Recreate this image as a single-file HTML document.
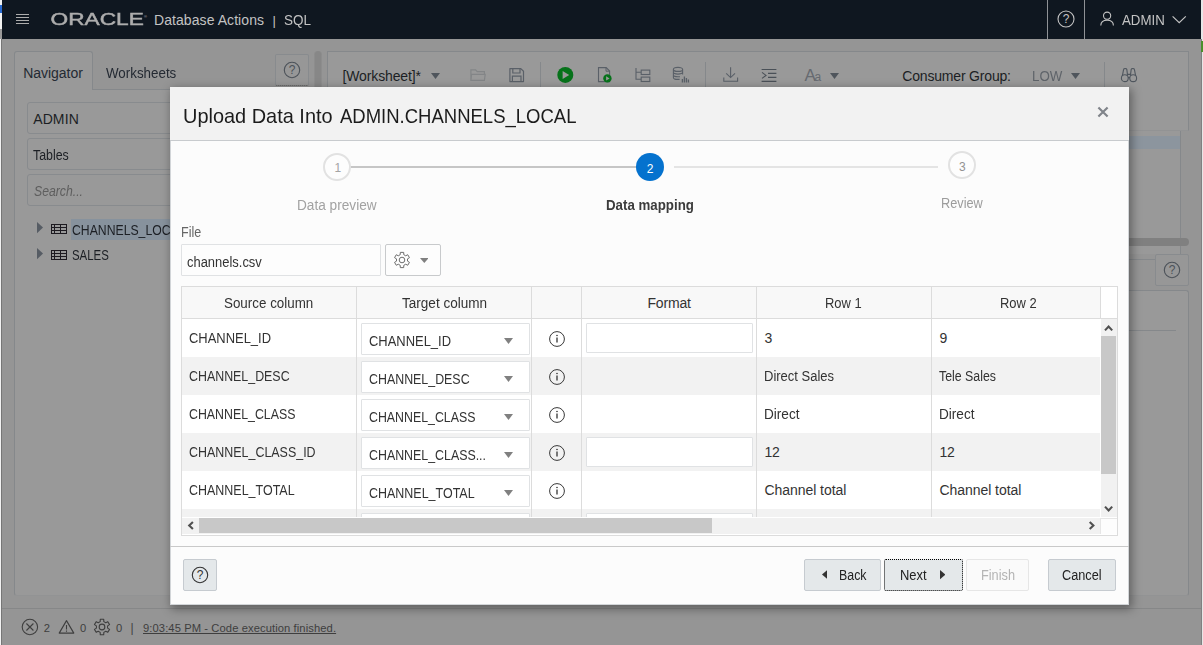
<!DOCTYPE html>
<html lang="en">
<head>
<meta charset="utf-8">
<title>Database Actions | SQL</title>
<style>
*{box-sizing:border-box;margin:0;padding:0}
html,body{width:1203px;height:645px;overflow:hidden;background:#959595}
body{font-family:"Liberation Sans",sans-serif;font-size:14px;color:#333;position:relative}
#app{position:absolute;left:0;top:0;width:1203px;height:645px;overflow:hidden;background:#959595}
.abs,.t,#app div,#app section,#app header,#app footer,#app button,#app svg,#app i,#app a,#app nav,#app ul,#app li,#app h1,#app label{position:absolute}
.t{white-space:pre;line-height:20px;display:block}
button{font:inherit;border:0;background:none}
ul{list-style:none;left:0;top:0}
h1{font:inherit;left:0;top:0}
.hdr{left:2px;top:0;width:1199px;height:39px;background:#0f1720}
.hdr .sep{top:0;width:1px;height:39px;background:#8f9296}
.panel{background:#999;border:1px solid #85888b;border-bottom-color:#929394}
.box{border:1px solid #888b8e;border-radius:3px;background:#999}
.dlg{left:170px;top:87px;width:959px;height:518px;background:#fcfcfc;box-shadow:2px 3px 9px 1px rgba(0,0,0,.37);outline:1px solid #d2d5d8;outline-offset:-1px}
.dlg-h{left:0;top:0;width:959px;height:54px;background:#f2f2f2;border-bottom:1px solid #c8cbce}
.btn{border:1px solid #c6cbd0;background:#e4e8ea;border-radius:2px}
.cell-in{border:1px solid #e0e2e4;background:#fff;border-radius:1px}
.row{left:0;width:918px;height:38px}
.row.alt{background:#f2f2f2}
.vline{width:1px;background:#dcdcdc}
</style>
</head>
<body>
<div id="app"><i class="abs" style="left:0;top:0;width:2px;height:645px;background:#f2f2f2"></i><i class="abs" style="left:0;top:5px;width:2px;height:8px;background:#2a6bd0"></i><i class="abs" style="left:0;top:29px;width:2px;height:10px;background:#9a9a9a"></i><i class="abs" style="left:1px;top:39px;width:1px;height:606px;background:#767676"></i><i class="abs" style="left:1201px;top:0;width:2px;height:645px;background:#e6e6e6"></i><i class="abs" style="left:1201px;top:39px;width:1px;height:606px;background:#808080"></i><i class="abs" style="left:1201px;top:41px;width:2px;height:11px;background:#4b8f2c"></i><header class="hdr"><i style="left:14px;top:14px;width:12.5px;height:1px;background:#adadad"></i><i style="left:14px;top:17px;width:12.5px;height:1px;background:#adadad"></i><i style="left:14px;top:20px;width:12.5px;height:1px;background:#adadad"></i><i style="left:14px;top:23px;width:12.5px;height:1px;background:#adadad"></i><svg style="left:48px;top:10px" width="100" height="20" viewBox="0 0 100 20"><text x="0.6" y="15" textLength="93.2" lengthAdjust="spacingAndGlyphs" font-family="Liberation Sans, sans-serif" font-size="16" fill="#adadad" stroke="#adadad" stroke-width="0.45" style="filter:grayscale(1)">ORACLE</text><text x="94" y="7.5" font-family="Liberation Sans, sans-serif" font-size="4" fill="#bdbdbd">®</text></svg><span class="t" style="left:152.00px;top:10.00px;font-size:14px;color:#c3c3c3;letter-spacing:0.069px;">Database Actions</span><span class="t" style="left:270.40px;top:10.50px;font-size:13px;color:#c3c3c3;">|</span><span class="t" style="left:282.00px;top:10.00px;font-size:14px;color:#c3c3c3;transform:scaleX(0.9637);transform-origin:0 0;">SQL</span><i class="sep" style="left:1045px"></i><i class="sep" style="left:1082px"></i><svg style="left:1054px;top:9px" width="20" height="20" viewBox="0 0 20 20"><circle cx="10" cy="10" r="8" fill="none" stroke="#c3c3c3" stroke-width="1.1"/><text x="10" y="14.2" text-anchor="middle" font-family="Liberation Sans, sans-serif" font-size="12" fill="#c3c3c3">?</text></svg><svg style="left:1097px;top:10px" width="18" height="18" viewBox="0 0 18 18"><circle cx="8.1" cy="5.7" r="3.6" fill="none" stroke="#c3c3c3" stroke-width="1.1"/><path d="M1.8 15.6 C1.8 11.8 4.6 10.2 8.1 10.2 C11.6 10.2 14.4 11.8 14.4 15.6" fill="none" stroke="#c3c3c3" stroke-width="1.1"/></svg><span class="t" style="left:1119.50px;top:10.00px;font-size:14px;color:#c3c3c3;transform:scaleX(0.9485);transform-origin:0 0;">ADMIN</span><svg style="left:1169px;top:14px" width="18" height="12" viewBox="0 0 18 12"><path d="M1.6 2.4 L8.2 8.6 L14.8 2.4" fill="none" stroke="#c3c3c3" stroke-width="1.2"/></svg></header><section class="panel" style="left:14px;top:89px;width:300px;height:507px;border-radius:0 0 3px 3px"></section><div class="abs" style="left:14px;top:51px;width:79px;height:39px;background:#999;border:1px solid #85888b;border-bottom:0;border-radius:3px 3px 0 0"></div><span class="t" style="left:23.30px;top:62.50px;font-size:14px;color:#242a33;letter-spacing:-0.053px;">Navigator</span><span class="t" style="left:106.30px;top:62.50px;font-size:14px;color:#242a33;transform:scaleX(0.9542);transform-origin:0 0;">Worksheets</span><button class="abs" style="left:275px;top:54px;width:34px;height:32px;border:1px solid #888b8e;border-bottom:1px dotted #555;border-radius:2px;background:#979797"></button><svg style="left:282px;top:60px" width="20" height="20" viewBox="0 0 20 20"><circle cx="10" cy="10" r="7.7" fill="none" stroke="#4c5259" stroke-width="1.1"/><text x="10" y="14.2" text-anchor="middle" font-family="Liberation Sans, sans-serif" font-size="12" fill="#4c5259">?</text></svg><div class="box" style="left:27px;top:102px;width:280px;height:32px"></div><span class="t" style="left:33.20px;top:109.20px;font-size:14px;color:#1c1f24;letter-spacing:0.119px;">ADMIN</span><div class="box" style="left:27px;top:138px;width:280px;height:32px"></div><span class="t" style="left:33.20px;top:145.00px;font-size:14px;color:#1c1f24;transform:scaleX(0.8846);transform-origin:0 0;">Tables</span><div class="box" style="left:27px;top:174px;width:280px;height:32px"></div><span class="t" style="left:34.00px;top:181.00px;font-size:14px;color:#5e5e5e;transform:scaleX(0.8745);transform-origin:0 0;font-style:italic;">Search...</span><ul><li class="abs" style="left:71px;top:219px;width:110px;height:21px;background:#87929d"></li><svg style="left:37px;top:222.4px" width="6" height="11.199999999999989" viewBox="0 0 6 11.199999999999989"><polygon points="0,0 6,5.599999999999994 0,11.199999999999989" fill="#565c64"/></svg><svg style="left:51px;top:224px" width="16" height="10" viewBox="0 0 16 10" shape-rendering="crispEdges"><path d="M0 0.5H16M0 3.5H16M0 6.5H16M0 9.5H16M0.5 0V10M3.5 0V10M9.5 0V10M15.5 0V10" stroke="#1d1a20" stroke-width="1" fill="none"/></svg><span class="t" style="left:72.00px;top:219.70px;font-size:14px;color:#1c1f24;transform:scaleX(0.8735);transform-origin:0 0;">CHANNELS_LOCAL</span><svg style="left:37px;top:248.4px" width="6" height="11.200000000000017" viewBox="0 0 6 11.200000000000017"><polygon points="0,0 6,5.6000000000000085 0,11.200000000000017" fill="#565c64"/></svg><svg style="left:51px;top:250px" width="16" height="10" viewBox="0 0 16 10" shape-rendering="crispEdges"><path d="M0 0.5H16M0 3.5H16M0 6.5H16M0 9.5H16M0.5 0V10M3.5 0V10M9.5 0V10M15.5 0V10" stroke="#1d1a20" stroke-width="1" fill="none"/></svg><span class="t" style="left:72.00px;top:244.70px;font-size:14px;color:#1c1f24;transform:scaleX(0.8152);transform-origin:0 0;">SALES</span></ul><div class="abs" style="left:314px;top:51px;width:8px;height:550px;background:#878787;border-radius:4px 4px 0 0;border-left:1px solid #8d8d8d;border-right:1px solid #8d8d8d"></div><section class="panel" style="left:327px;top:51px;width:862px;height:80px"></section><span class="t" style="left:342.50px;top:66.00px;font-size:14px;color:#1c1f24;letter-spacing:-0.126px;">[Worksheet]*</span><svg style="left:430.5px;top:73px" width="9.0" height="6" viewBox="0 0 9.0 6"><polygon points="0,0 9.0,0 4.5,6" fill="#4f555c"/></svg><svg style="left:469px;top:66px" width="18" height="18" viewBox="0 0 18 18"><path d="M1.9 14.3V3.8H6.6L8.2 5.6H15.4V8.3M1.9 14.3L2.6 8.3H16.2L15.4 14.3Z" fill="none" stroke="#838587" stroke-width="1.2"/></svg><svg style="left:508px;top:66px" width="18" height="18" viewBox="0 0 18 18"><path d="M1.9 2.6H12.8L15.5 5.2V15.6H1.9Z" fill="none" stroke="#5a6068" stroke-width="1.2" stroke-linejoin="round"/><path d="M4.8 2.6V7H12V2.6M4.4 15.6V10.2H13V15.6" fill="none" stroke="#5a6068" stroke-width="1.2"/></svg><i class="abs" style="left:540px;top:62px;width:1px;height:60px;background:#85888b"></i><svg style="left:556px;top:66px" width="18" height="18" viewBox="0 0 18 18"><circle cx="9.3" cy="8.9" r="8" fill="#06721a"/><polygon points="6.6,4.9 13.2,8.9 6.6,12.9" fill="#999"/></svg><svg style="left:596px;top:65px" width="18" height="19" viewBox="0 0 18 19"><path d="M2.5 2.6H10.2L13.6 6V16.6H2.5Z" fill="none" stroke="#5a6068" stroke-width="1.1"/><path d="M10 2.8V6.2H13.4" fill="none" stroke="#5a6068" stroke-width="1"/><circle cx="11.4" cy="13.4" r="4.2" fill="#06721a"/><polygon points="10.1,11.3 13.6,13.4 10.1,15.5" fill="#999"/></svg><svg style="left:634px;top:66px" width="18" height="18" viewBox="0 0 18 18"><path d="M2 2V13.3H7M2 6.3H7" fill="none" stroke="#5a6068" stroke-width="1.1"/><rect x="7.2" y="4.1" width="8.6" height="4.4" fill="none" stroke="#5a6068" stroke-width="1.1"/><rect x="7.2" y="11.1" width="8.6" height="4.4" fill="none" stroke="#5a6068" stroke-width="1.1"/></svg><svg style="left:671px;top:65px" width="20" height="20" viewBox="0 0 20 20"><ellipse cx="7" cy="4.4" rx="4.6" ry="2" fill="none" stroke="#5a6068" stroke-width="1.1"/><path d="M2.4 4.4V12.4C2.4 13.5 4.4 14.4 7 14.4H8.6M11.6 4.4V9.6M2.4 7.1C2.4 8.2 4.4 9.1 7 9.1S11.6 8.2 11.6 7.1M2.4 9.8C2.4 10.9 4.4 11.8 7 11.8H9" fill="none" stroke="#5a6068" stroke-width="1.1"/><path d="M11.4 17.6V14M13.4 17.6V11.6M15.4 17.6V13M17.4 17.6V14.6" fill="none" stroke="#5a6068" stroke-width="1.3"/></svg><i class="abs" style="left:705px;top:62px;width:1px;height:60px;background:#85888b"></i><svg style="left:721px;top:65px" width="20" height="20" viewBox="0 0 20 20"><path d="M9.6 2.2V12.4M5.2 8.4L9.6 12.6L14 8.4M2.8 12.6V16.2H16.6V12.6" fill="none" stroke="#5a6068" stroke-width="1.1"/></svg><svg style="left:760px;top:66px" width="18" height="18" viewBox="0 0 18 18"><path d="M1.6 3.5H16.4M8 7.4H16.4M8 11.4H16.4M1.6 15.4H16.4M2 6.4L6 9.4L2 12.4" fill="none" stroke="#4a5057" stroke-width="1.1"/></svg><span class="t" style="left:804.40px;top:65.60px;font-size:17px;color:#666a70;">A</span><span class="t" style="left:814.60px;top:66.60px;font-size:12px;color:#666a70;">a</span><svg style="left:830px;top:73px" width="9" height="6" viewBox="0 0 9 6"><polygon points="0,0 9,0 4.5,6" fill="#4f555c"/></svg><span class="t" style="left:902.30px;top:65.90px;font-size:14px;color:#1c1f24;letter-spacing:-0.184px;">Consumer Group:</span><span class="t" style="left:1032.00px;top:65.90px;font-size:14px;color:#5f646a;transform:scaleX(0.9501);transform-origin:0 0;">LOW</span><svg style="left:1071.2px;top:73px" width="9.0" height="6" viewBox="0 0 9.0 6"><polygon points="0,0 9.0,0 4.5,6" fill="#4f555c"/></svg><i class="abs" style="left:1104px;top:62px;width:1px;height:60px;background:#85888b"></i><svg style="left:1119px;top:65px" width="20" height="20" viewBox="0 0 20 20"><path d="M3.4 10.6L4.6 4.4C4.8 3.2 7.6 3.2 7.8 4.4L8.6 10.6M11.4 10.6L12.2 4.4C12.4 3.2 15.2 3.2 15.4 4.4L16.6 10.6" fill="none" stroke="#4f565e" stroke-width="1.1"/><circle cx="5.8" cy="13.2" r="3.4" fill="none" stroke="#4f565e" stroke-width="1.1"/><circle cx="14.2" cy="13.2" r="3.4" fill="none" stroke="#4f565e" stroke-width="1.1"/><path d="M8.4 9.4H11.6M9 12.6H11" fill="none" stroke="#4f565e" stroke-width="1.1"/></svg><section class="abs" style="left:327px;top:131px;width:854px;height:123px;background:#999;border-right:1px solid #85888b;border-left:1px solid #85888b"></section><div class="abs" style="left:1120px;top:136px;width:60px;height:13px;background:#8c959e"></div><div class="abs" style="left:327px;top:238px;width:862px;height:8px;background:#808080;border-radius:4px"></div><i class="abs" style="left:327px;top:259px;width:829px;height:1px;background:#85888b"></i><button class="abs" style="left:1155px;top:254px;width:34px;height:32px;border:1px solid #888b8e;border-radius:2px;background:#979797"></button><svg style="left:1162px;top:260px" width="20" height="20" viewBox="0 0 20 20"><circle cx="10" cy="10" r="7.7" fill="none" stroke="#4c5259" stroke-width="1.1"/><text x="10" y="14.2" text-anchor="middle" font-family="Liberation Sans, sans-serif" font-size="12" fill="#4c5259">?</text></svg><section class="panel" style="left:327px;top:290px;width:862px;height:306px;border-radius:3px"></section><i class="abs" style="left:340px;top:330px;width:836px;height:1px;background:#85888b"></i><footer class="abs" style="left:2px;top:608px;width:1199px;height:37px;border-top:1px solid #868788;background:#959595"></footer><svg style="left:20px;top:617px" width="20" height="20" viewBox="0 0 20 20"><circle cx="9.9" cy="10" r="7.7" fill="none" stroke="#3e3e3e" stroke-width="1.1"/><path d="M6.4 6.5L13.4 13.5M13.4 6.5L6.4 13.5" fill="none" stroke="#3e3e3e" stroke-width="1.1"/></svg><span class="t" style="left:43.80px;top:618.00px;font-size:11.2px;color:#3e3e3e;">2</span><svg style="left:57px;top:618px" width="20" height="18" viewBox="0 0 20 18"><path d="M9.5 2.6L16.8 15.1H2.2Z" fill="none" stroke="#3e3e3e" stroke-width="1.1" stroke-linejoin="round"/><path d="M9.5 7V11.4M9.5 12.6V13.8" fill="none" stroke="#3e3e3e" stroke-width="1.1"/></svg><span class="t" style="left:80.00px;top:618.00px;font-size:11.2px;color:#3e3e3e;">0</span><svg style="left:92.2px;top:617px" width="20" height="20" viewBox="0 0 20 20"><path d="M8.19 4.61 L8.28 2.29 L11.72 2.29 L11.81 4.61 L13.76 5.73 L15.82 4.65 L17.54 7.64 L15.58 8.88 L15.58 11.12 L17.54 12.36 L15.82 15.35 L13.76 14.27 L11.81 15.39 L11.72 17.71 L8.28 17.71 L8.19 15.39 L6.24 14.27 L4.18 15.35 L2.46 12.36 L4.42 11.12 L4.42 8.88 L2.46 7.64 L4.18 4.65 L6.24 5.73Z" fill="none" stroke="#3e3e3e" stroke-width="1.1" stroke-linejoin="round"/><circle cx="10" cy="10" r="2.84" fill="none" stroke="#3e3e3e" stroke-width="1.1"/></svg><span class="t" style="left:116.00px;top:618.00px;font-size:11.2px;color:#3e3e3e;">0</span><span class="t" style="left:130.60px;top:617.80px;font-size:12px;color:#3e3e3e;">|</span><span class="t" style="left:143.00px;top:617.80px;font-size:11.2px;color:#3e3e3e;letter-spacing:0.092px;text-decoration:underline;text-underline-offset:1px;">9:03:45 PM - Code execution finished.</span><div class="dlg" role="dialog"><div class="dlg-h"></div><h1><span class="t title" style="left:13.00px;top:19.20px;font-size:21px;color:#1c1c1c;transform:scaleX(0.9492);transform-origin:0 0;">Upload Data Into</span> <span class="t title" style="left:169.60px;top:19.20px;font-size:21px;color:#1c1c1c;transform:scaleX(0.8808);transform-origin:0 0;">ADMIN.CHANNELS_LOCAL</span></h1><svg style="left:926px;top:18px" width="14" height="14" viewBox="0 0 14 14"><path d="M2.4 2.5L11.6 11.5M11.6 2.5L2.4 11.5" fill="none" stroke="#80848a" stroke-width="2.2"/></svg><i class="abs" style="left:180px;top:79px;width:287px;height:2px;background:#c6c6c6"></i><i class="abs" style="left:504px;top:79px;width:264px;height:2px;background:#e4e4e4"></i><div class="abs" style="left:153px;top:66px;width:28px;height:28px;border-radius:50%;border:2px solid #e2e2e2;background:#fdfdfd"></div><span class="t" style="left:164.50px;top:71.30px;font-size:12px;color:#a4a4a4;">1</span><div class="abs" style="left:466px;top:66px;width:28px;height:28px;border-radius:50%;background:#0572ce"></div><span class="t" style="left:476.70px;top:71.70px;font-size:12px;color:#ffffff;">2</span><div class="abs" style="left:778px;top:64px;width:28px;height:28px;border-radius:50%;border:2px solid #e2e2e2;background:#fdfdfd"></div><span class="t" style="left:789.00px;top:69.60px;font-size:12px;color:#929292;">3</span><span class="t" style="left:127.40px;top:107.80px;font-size:14px;color:#a2a2a2;transform:scaleX(0.9743);transform-origin:0 0;">Data preview</span><span class="t" style="left:436.00px;top:107.80px;font-size:14px;color:#3c3c3c;transform:scaleX(0.9495);transform-origin:0 0;font-weight:700;">Data mapping</span><span class="t" style="left:771.20px;top:105.80px;font-size:14px;color:#9c9c9c;transform:scaleX(0.9106);transform-origin:0 0;">Review</span><span class="t" style="left:11.00px;top:134.80px;font-size:14px;color:#666;transform:scaleX(0.8953);transform-origin:0 0;">File</span><div class="cell-in" style="left:11px;top:157px;width:200px;height:32px;background:#fdfdfd"></div><span class="t" style="left:17.20px;top:165.00px;font-size:14px;color:#333;transform:scaleX(0.9242);transform-origin:0 0;">channels.csv</span><button class="abs" style="left:215px;top:157px;width:56px;height:32px;border:1px solid #c8cacc;border-radius:2px;background:#fdfdfd"></button><svg style="left:222px;top:163px" width="20" height="20" viewBox="0 0 20 20"><path d="M8.21 4.68 L8.30 2.39 L11.70 2.39 L11.79 4.68 L13.71 5.79 L15.74 4.72 L17.44 7.67 L15.51 8.89 L15.51 11.11 L17.44 12.33 L15.74 15.28 L13.71 14.21 L11.79 15.32 L11.70 17.61 L8.30 17.61 L8.21 15.32 L6.29 14.21 L4.26 15.28 L2.56 12.33 L4.49 11.11 L4.49 8.89 L2.56 7.67 L4.26 4.72 L6.29 5.79Z" fill="none" stroke="#6e6e6e" stroke-width="1.0" stroke-linejoin="round"/><circle cx="10" cy="10" r="2.81" fill="none" stroke="#6e6e6e" stroke-width="1.0"/></svg><svg style="left:249.7px;top:171px" width="8.600000000000023" height="5" viewBox="0 0 8.600000000000023 5"><polygon points="0,0 8.600000000000023,0 4.300000000000011,5" fill="#808080"/></svg><div class="abs tbl" style="left:11px;top:199px;width:937px;height:250px;border:1px solid #dcdcdc;background:#fff;overflow:hidden"><div class="abs" style="left:0;top:0;width:918px;height:31px;background:#f8f8f8"></div><i class="abs" style="left:0;top:31px;width:935px;height:1px;background:#dcdcdc"></i><span class="t" style="left:42.30px;top:6.00px;font-size:14px;color:#333;transform:scaleX(0.9562);transform-origin:0 0;">Source column</span><span class="t" style="left:219.50px;top:6.00px;font-size:14px;color:#333;transform:scaleX(0.9677);transform-origin:0 0;">Target column</span><span class="t" style="left:465.40px;top:6.00px;font-size:14px;color:#333;letter-spacing:-0.149px;">Format</span><span class="t" style="left:643.30px;top:6.00px;font-size:14px;color:#333;transform:scaleX(0.9247);transform-origin:0 0;">Row 1</span><span class="t" style="left:818.30px;top:6.00px;font-size:14px;color:#333;transform:scaleX(0.9247);transform-origin:0 0;">Row 2</span><div class="row" style="left:0;top:32px"></div><div class="row alt" style="left:0;top:70px"></div><div class="row" style="left:0;top:108px"></div><div class="row alt" style="left:0;top:146px"></div><div class="row" style="left:0;top:184px"></div><div class="row alt" style="left:0;top:222px"></div><i class="vline" style="left:174px;top:0;height:232px"></i><i class="vline" style="left:349px;top:0;height:232px"></i><i class="vline" style="left:399px;top:0;height:232px"></i><i class="vline" style="left:574px;top:0;height:232px"></i><i class="vline" style="left:749px;top:0;height:232px"></i><i class="vline" style="left:918px;top:0;height:32px"></i><span class="t" style="left:7.40px;top:41.00px;font-size:14px;color:#333;transform:scaleX(0.9244);transform-origin:0 0;">CHANNEL_ID</span><div class="cell-in" style="left:179px;top:36px;width:169px;height:32px"></div><span class="t" style="left:187.20px;top:44.00px;font-size:14px;color:#333;transform:scaleX(0.9244);transform-origin:0 0;">CHANNEL_ID</span><svg style="left:322px;top:51px" width="9" height="6" viewBox="0 0 9 6"><polygon points="0,0 9,0 4.5,6" fill="#808080"/></svg><svg style="left:365px;top:41.89999999999998px" width="20" height="20" viewBox="0 0 20 20"><circle cx="10" cy="10" r="7.4" fill="none" stroke="#383838" stroke-width="1"/><path d="M10 8.6V13.6" stroke="#333" stroke-width="1.3" fill="none"/><circle cx="10" cy="6.5" r="0.8" fill="#333"/></svg><div class="cell-in" style="left:404px;top:36px;width:167px;height:30px"></div><span class="t" style="left:582.40px;top:41.00px;font-size:14px;color:#333;">3</span><span class="t" style="left:757.40px;top:41.00px;font-size:14px;color:#333;">9</span><span class="t" style="left:7.40px;top:79.00px;font-size:14px;color:#333;transform:scaleX(0.8856);transform-origin:0 0;">CHANNEL_DESC</span><div class="cell-in" style="left:179px;top:74px;width:169px;height:32px"></div><span class="t" style="left:187.20px;top:82.00px;font-size:14px;color:#333;transform:scaleX(0.8856);transform-origin:0 0;">CHANNEL_DESC</span><svg style="left:322px;top:89px" width="9" height="6" viewBox="0 0 9 6"><polygon points="0,0 9,0 4.5,6" fill="#808080"/></svg><svg style="left:365px;top:79.89999999999998px" width="20" height="20" viewBox="0 0 20 20"><circle cx="10" cy="10" r="7.4" fill="none" stroke="#383838" stroke-width="1"/><path d="M10 8.6V13.6" stroke="#333" stroke-width="1.3" fill="none"/><circle cx="10" cy="6.5" r="0.8" fill="#333"/></svg><span class="t" style="left:582.40px;top:79.00px;font-size:14px;color:#333;transform:scaleX(0.9275);transform-origin:0 0;">Direct Sales</span><span class="t" style="left:757.40px;top:79.00px;font-size:14px;color:#333;transform:scaleX(0.8824);transform-origin:0 0;">Tele Sales</span><span class="t" style="left:7.40px;top:117.00px;font-size:14px;color:#333;transform:scaleX(0.8822);transform-origin:0 0;">CHANNEL_CLASS</span><div class="cell-in" style="left:179px;top:112px;width:169px;height:32px"></div><span class="t" style="left:187.20px;top:120.00px;font-size:14px;color:#333;transform:scaleX(0.8822);transform-origin:0 0;">CHANNEL_CLASS</span><svg style="left:322px;top:127px" width="9" height="6" viewBox="0 0 9 6"><polygon points="0,0 9,0 4.5,6" fill="#808080"/></svg><svg style="left:365px;top:117.89999999999998px" width="20" height="20" viewBox="0 0 20 20"><circle cx="10" cy="10" r="7.4" fill="none" stroke="#383838" stroke-width="1"/><path d="M10 8.6V13.6" stroke="#333" stroke-width="1.3" fill="none"/><circle cx="10" cy="6.5" r="0.8" fill="#333"/></svg><span class="t" style="left:582.40px;top:117.00px;font-size:14px;color:#333;transform:scaleX(0.9709);transform-origin:0 0;">Direct</span><span class="t" style="left:757.40px;top:117.00px;font-size:14px;color:#333;transform:scaleX(0.9709);transform-origin:0 0;">Direct</span><span class="t" style="left:7.40px;top:155.00px;font-size:14px;color:#333;transform:scaleX(0.8891);transform-origin:0 0;">CHANNEL_CLASS_ID</span><div class="cell-in" style="left:179px;top:150px;width:169px;height:32px"></div><span class="t" style="left:187.20px;top:158.00px;font-size:14px;color:#333;transform:scaleX(0.8845);transform-origin:0 0;">CHANNEL_CLASS...</span><svg style="left:322px;top:165px" width="9" height="6" viewBox="0 0 9 6"><polygon points="0,0 9,0 4.5,6" fill="#808080"/></svg><svg style="left:365px;top:155.89999999999998px" width="20" height="20" viewBox="0 0 20 20"><circle cx="10" cy="10" r="7.4" fill="none" stroke="#383838" stroke-width="1"/><path d="M10 8.6V13.6" stroke="#333" stroke-width="1.3" fill="none"/><circle cx="10" cy="6.5" r="0.8" fill="#333"/></svg><div class="cell-in" style="left:404px;top:150px;width:167px;height:30px"></div><span class="t" style="left:582.40px;top:155.00px;font-size:14px;color:#333;letter-spacing:-0.178px;">12</span><span class="t" style="left:757.40px;top:155.00px;font-size:14px;color:#333;letter-spacing:-0.178px;">12</span><span class="t" style="left:7.40px;top:193.00px;font-size:14px;color:#333;transform:scaleX(0.8910);transform-origin:0 0;">CHANNEL_TOTAL</span><div class="cell-in" style="left:179px;top:188px;width:169px;height:32px"></div><span class="t" style="left:187.20px;top:196.00px;font-size:14px;color:#333;transform:scaleX(0.8910);transform-origin:0 0;">CHANNEL_TOTAL</span><svg style="left:322px;top:203px" width="9" height="6" viewBox="0 0 9 6"><polygon points="0,0 9,0 4.5,6" fill="#808080"/></svg><svg style="left:365px;top:193.89999999999998px" width="20" height="20" viewBox="0 0 20 20"><circle cx="10" cy="10" r="7.4" fill="none" stroke="#383838" stroke-width="1"/><path d="M10 8.6V13.6" stroke="#333" stroke-width="1.3" fill="none"/><circle cx="10" cy="6.5" r="0.8" fill="#333"/></svg><span class="t" style="left:582.40px;top:193.00px;font-size:14px;color:#333;letter-spacing:-0.043px;">Channel total</span><span class="t" style="left:757.40px;top:193.00px;font-size:14px;color:#333;letter-spacing:-0.043px;">Channel total</span><div class="cell-in" style="left:179px;top:226px;width:169px;height:32px"></div><div class="cell-in" style="left:404px;top:226px;width:167px;height:30px"></div><div class="abs" style="left:919px;top:32px;width:16px;height:199px;background:#f1f1f1"></div><div class="abs" style="left:919px;top:49px;width:15px;height:138px;background:#c8c8c8"></div><svg style="left:919px;top:32px" width="16" height="17" viewBox="0 0 16 17"><path d="M4.0 11.4L7.6 7.6L11.2 11.4" fill="none" stroke="#505050" stroke-width="2.1"/></svg><svg style="left:919px;top:213px" width="16" height="17" viewBox="0 0 16 17"><path d="M4.0 6.6L7.6 10.4L11.2 6.6" fill="none" stroke="#505050" stroke-width="2.1"/></svg><div class="abs" style="left:0;top:230px;width:935px;height:18px;background:#fff"></div><div class="abs" style="left:0;top:231px;width:918px;height:16px;background:#f1f1f1"></div><div class="abs" style="left:17px;top:231px;width:513px;height:15px;background:#c8c8c8"></div><svg style="left:0px;top:230px" width="17" height="17" viewBox="0 0 17 17"><path d="M10.9 5.1L7.2 8.6L10.9 12.1" fill="none" stroke="#505050" stroke-width="2.1"/></svg><svg style="left:902px;top:230px" width="17" height="17" viewBox="0 0 17 17"><path d="M5.7 5.1L9.4 8.6L5.7 12.1" fill="none" stroke="#505050" stroke-width="2.1"/></svg><div class="abs" style="left:918px;top:231px;width:17px;height:16px;background:#fdfdfd;border-left:1px solid #e6e6e6;border-top:1px solid #e6e6e6"></div></div><i class="abs" style="left:0;top:459px;width:959px;height:1px;background:#c9c9c9"></i><button class="btn" style="left:13px;top:472px;width:34px;height:32px"></button><svg style="left:20px;top:478px" width="20" height="20" viewBox="0 0 20 20"><circle cx="10" cy="10" r="7.7" fill="none" stroke="#333" stroke-width="1.1"/><text x="10" y="14.2" text-anchor="middle" font-family="Liberation Sans, sans-serif" font-size="12" fill="#333">?</text></svg><button class="btn" style="left:634px;top:472px;width:77px;height:32px"></button><svg style="left:652px;top:483.4px" width="5.399999999999977" height="9.200000000000045" viewBox="0 0 5.399999999999977 9.200000000000045"><polygon points="5.399999999999977,0 0,4.600000000000023 5.399999999999977,9.200000000000045" fill="#333"/></svg><span class="t" style="left:669.00px;top:478.00px;font-size:14px;color:#222;transform:scaleX(0.8835);transform-origin:0 0;">Back</span><button class="btn" style="left:714px;top:472px;width:79px;height:32px;border:1px dotted #000"></button><span class="t" style="left:729.60px;top:478.00px;font-size:14px;color:#222;transform:scaleX(0.9237);transform-origin:0 0;">Next</span><svg style="left:769.6px;top:483.4px" width="5.399999999999977" height="9.200000000000045" viewBox="0 0 5.399999999999977 9.200000000000045"><polygon points="0,0 5.399999999999977,4.600000000000023 0,9.200000000000045" fill="#333"/></svg><button class="btn" style="left:796px;top:472px;width:63px;height:32px;background:#fafafa;border-color:#e6e6e6"></button><span class="t" style="left:810.60px;top:478.00px;font-size:14px;color:#b4b4b4;transform:scaleX(0.9101);transform-origin:0 0;">Finish</span><button class="btn" style="left:878px;top:472px;width:68px;height:32px"></button><span class="t" style="left:892.30px;top:478.00px;font-size:14px;color:#222;transform:scaleX(0.9084);transform-origin:0 0;">Cancel</span></div></div>
</body>
</html>
